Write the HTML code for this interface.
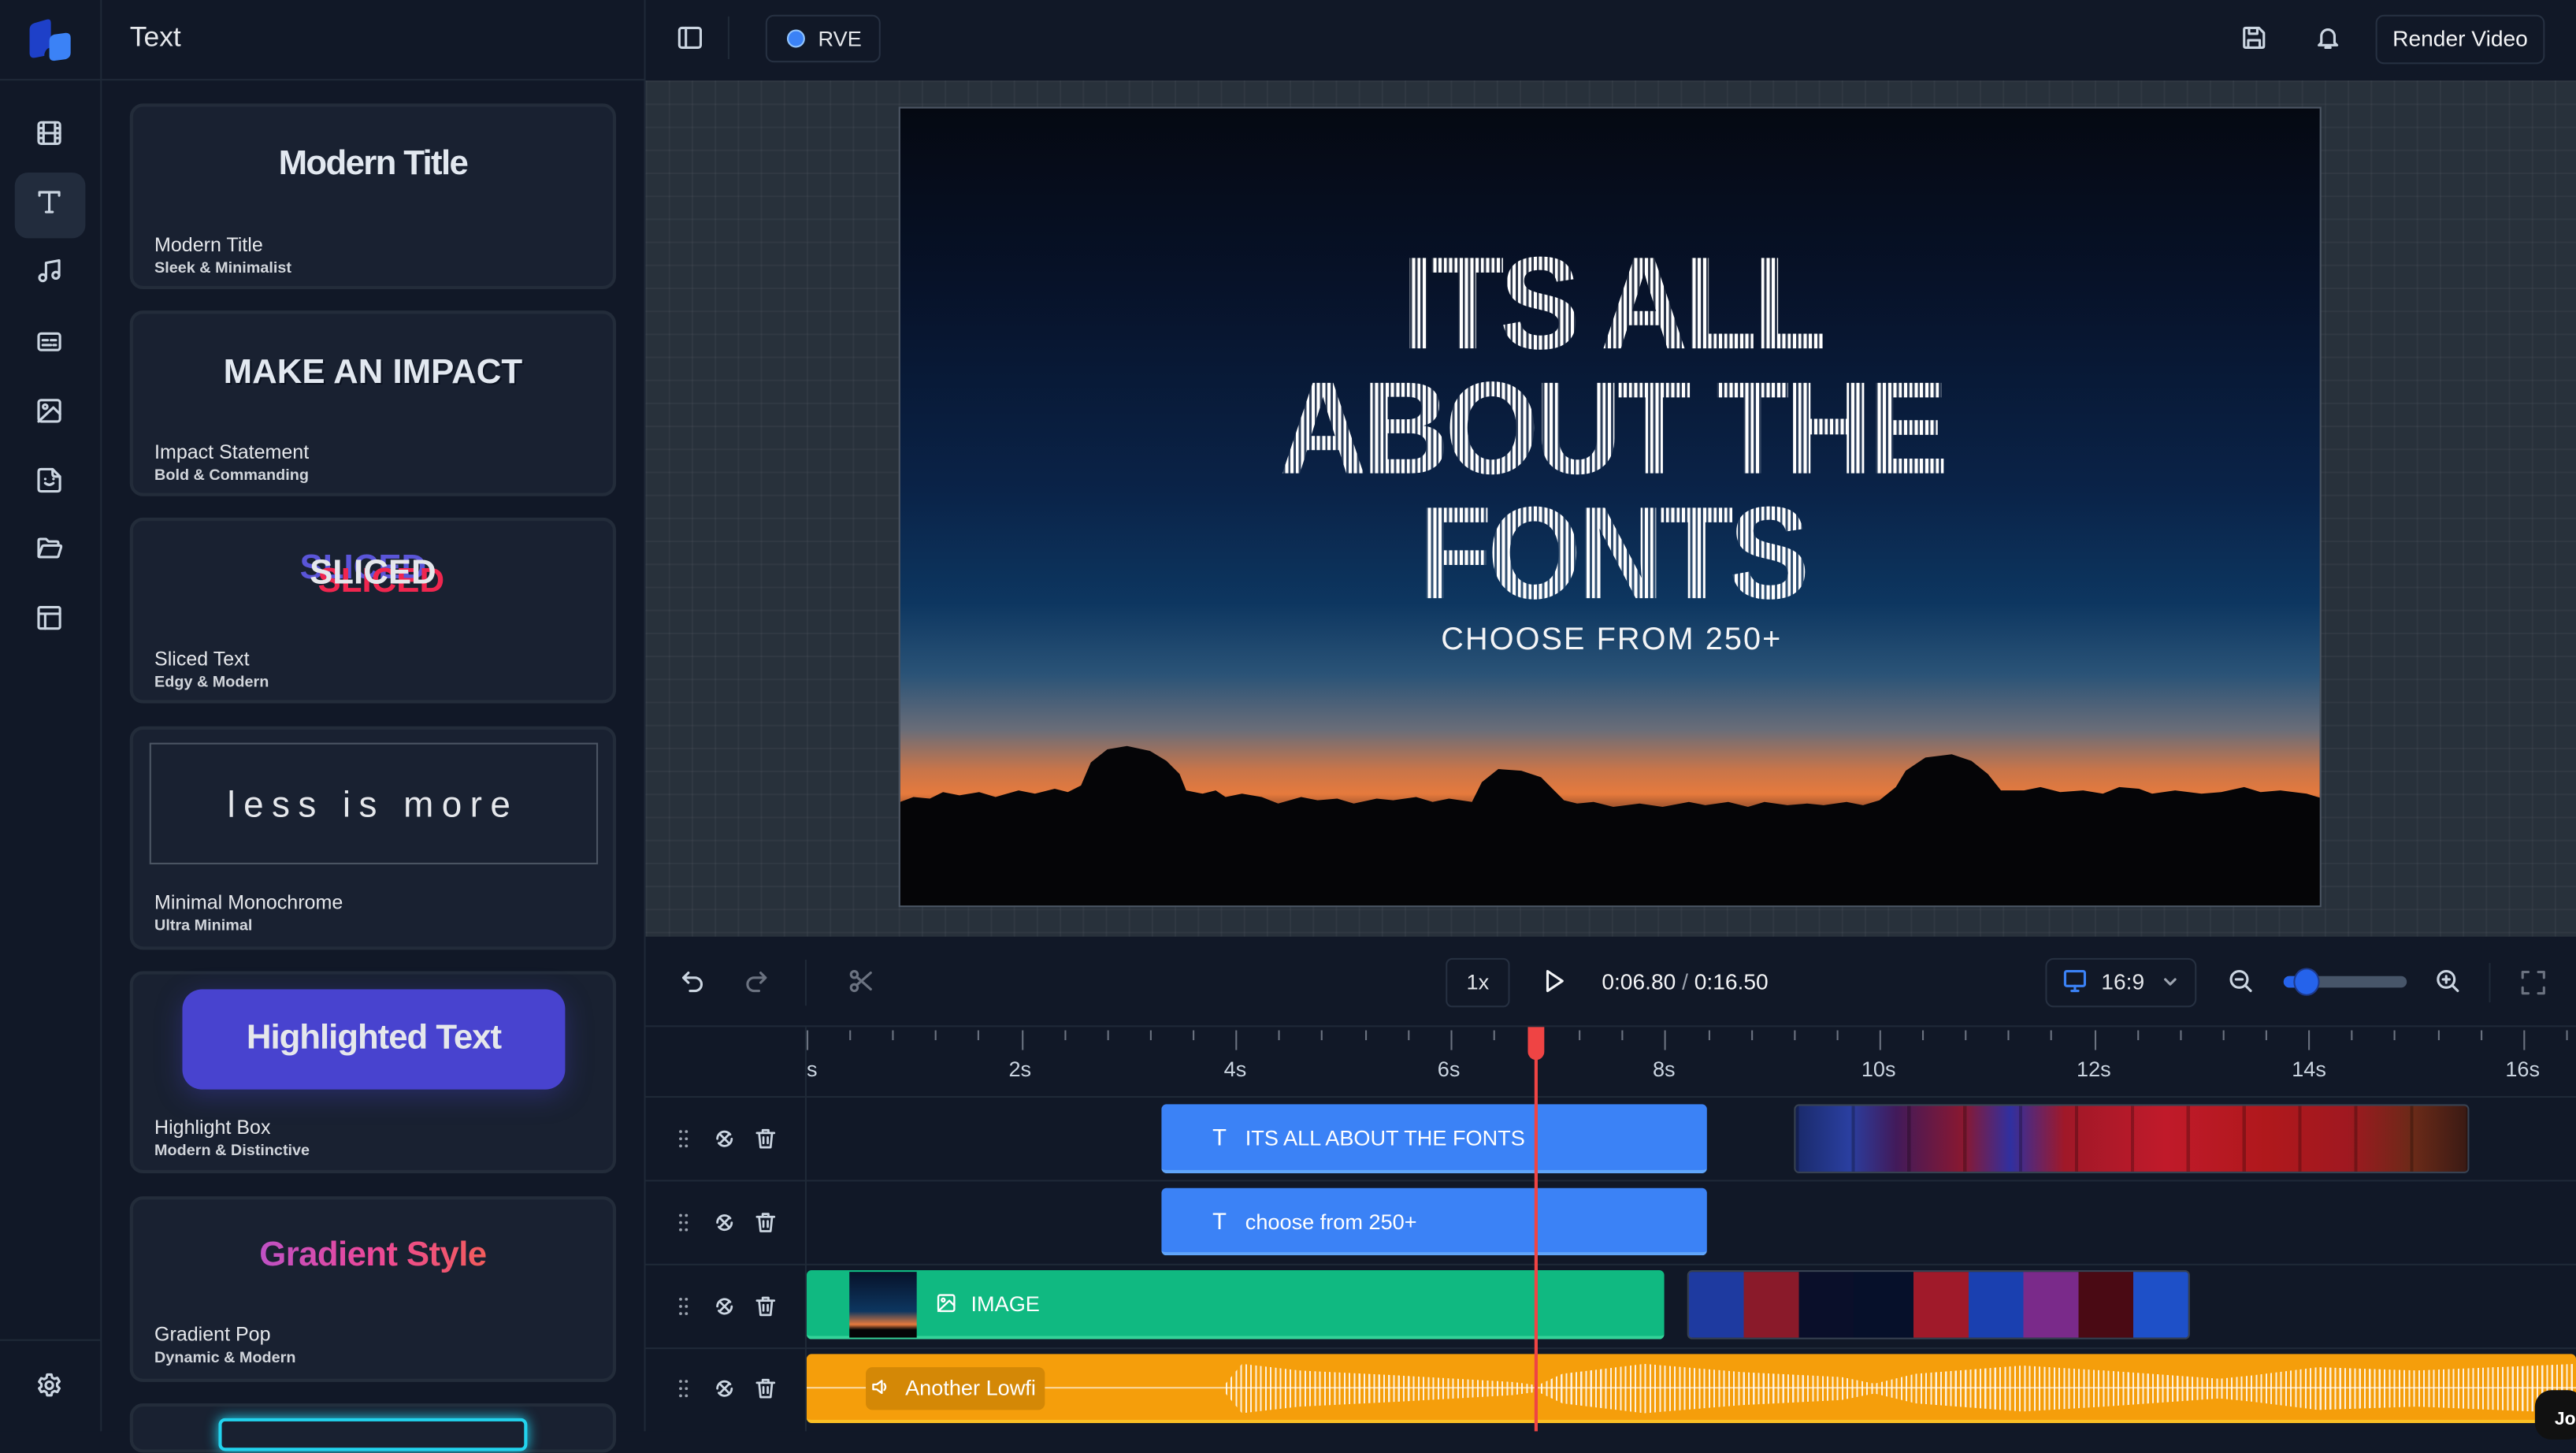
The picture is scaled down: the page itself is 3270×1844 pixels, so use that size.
<!DOCTYPE html>
<html><head><meta charset="utf-8">
<style>
*{box-sizing:border-box;margin:0;padding:0}
html,body{width:3270px;height:1816px;overflow:hidden;background:#111827}
#s{position:absolute;left:0;top:0;width:1568px;height:871px;transform:scale(2.08546);transform-origin:0 0;font-family:"Liberation Sans",sans-serif;color:#e5e7eb;background:#111827}
.a{position:absolute}
.ico{position:absolute;width:16px;height:16px;fill:none;stroke:#cbd5e1;stroke-width:1.5;stroke-linecap:round;stroke-linejoin:round}
.card{position:absolute;left:79px;width:296px;background:#192131;border:2px solid #232c3a;border-radius:8px}
.card .n{position:absolute;left:13px;font-size:12px;color:#e5e7eb}
.card .d{position:absolute;left:13px;font-size:9.5px;font-weight:bold;color:#d1d5db}
.clip{position:absolute;border-radius:3px;color:#fff;font-size:13px}
.tick{position:absolute;top:627px;width:1px;background:#6b7280}
.lab{position:absolute;top:643px;font-size:13px;color:#cbd5e1}
.th{position:absolute;left:392px;width:1176px;height:1px;background:#1f2937}
.ttl{text-align:center;font-size:80px;line-height:76px;height:76px;letter-spacing:-3px;background:repeating-linear-gradient(90deg,#fff 0 2px,rgba(255,255,255,.15) 2px 3.5px);-webkit-background-clip:text;background-clip:text;color:transparent;font-weight:bold}
</style></head><body><div id="s">
<!-- rail -->
<div class="a" style="left:61px;top:0;width:1px;height:871px;background:#1f2937"></div>
<div class="a" style="left:0;top:48px;width:392px;height:1px;background:#1f2937"></div>
<div class="a" style="left:392px;top:0;width:1px;height:871px;background:#1f2937"></div>
<svg class="a" style="left:14px;top:10px" width="32" height="30" viewBox="0 0 32 30"><path d="M4 8q0-3 3-4l7-2q3-1 3 2v15q-3 0-4 4l0 1-5 1q-4 1-4-3z" fill="#1e40c8"/><path d="M16 15q0-3 3-4l7-1q3 0 3 3v9q0 3-3 4l-7 1q-3 0-3-3z" fill="#3b82f6"/></svg>
<div class="a" style="left:9px;top:105px;width:43px;height:40px;background:#222c3d;border-radius:8px"></div>
<svg class="ico" style="left:22px;top:73px" viewBox="0 0 16 16"><rect x="1.5" y="1.5" width="13" height="13" rx="1.5"/><path d="M4.5 1.5v13M11.5 1.5v13M1.5 5h3M1.5 8h13M1.5 11h3M11.5 5h3M11.5 11h3"/></svg>
<svg class="ico" style="left:22px;top:115px" viewBox="0 0 16 16"><path d="M2 2h12M8 2v12M6 14h4M2 2v2M14 2v2"/></svg>
<svg class="ico" style="left:22px;top:157px" viewBox="0 0 16 16"><path d="M6 12V3l8-1.5v9"/><circle cx="4" cy="12" r="2"/><circle cx="12" cy="10.5" r="2"/></svg>
<svg class="ico" style="left:22px;top:200px" viewBox="0 0 16 16"><rect x="1.5" y="3" width="13" height="10" rx="1.5"/><path d="M4 7h3M9 7h3M4 10h5M10.5 10h1.5"/></svg>
<svg class="ico" style="left:22px;top:242px" viewBox="0 0 16 16"><rect x="1.5" y="1.5" width="13" height="13" rx="1.5"/><circle cx="5.5" cy="5.5" r="1.3"/><path d="M14.5 10l-4-4-9 8.5"/></svg>
<svg class="ico" style="left:22px;top:284px" viewBox="0 0 16 16"><path d="M1.5 3q0-1.5 1.5-1.5h7l4.5 4.5v7.5q0 1.5-1.5 1.5H3q-1.5 0-1.5-1.5zM10 1.5v3q0 1.5 1.5 1.5h3M5.5 10q2.5 2 5 0M5.5 7.5h.1M10.5 7.5h.1"/></svg>
<svg class="ico" style="left:22px;top:326px" viewBox="0 0 16 16"><path d="M1.5 12.5V3q0-1 1-1h3.5l1.5 1.5h5q1 0 1 1V6M1.5 12.5L3.5 7q.3-1 1.3-1h9.7q1 0 .7 1l-1.7 5.5q-.3.5-1 .5H2.5q-1 0-1-.5z"/></svg>
<svg class="ico" style="left:22px;top:368px" viewBox="0 0 16 16"><rect x="1.5" y="1.5" width="13" height="13" rx="1"/><path d="M1.5 5.5h13M5.5 5.5v9"/></svg>
<div class="a" style="left:0;top:815px;width:61px;height:1px;background:#1f2937"></div>
<svg class="ico" style="left:22px;top:835px" viewBox="0 0 16 16"><circle cx="8" cy="8" r="2.2"/><path d="M6.7 1.5h2.6l.4 1.8 1.4.8 1.8-.6 1.3 2.2-1.4 1.3v1.6l1.4 1.3-1.3 2.2-1.8-.6-1.4.8-.4 1.8H6.7l-.4-1.8-1.4-.8-1.8.6-1.3-2.2L3.2 8.8V7.2L1.8 5.9l1.3-2.2 1.8.6 1.4-.8z"/></svg>
<!-- panel -->
<div class="a" style="left:79px;top:13px;font-size:17px;color:#e5e7eb">Text</div>
<div class="card" style="top:63px;height:113px"><div class="a" style="left:0;width:292px;top:23px;text-align:center;font-size:21px;font-weight:bold;color:#e2e8f0;letter-spacing:-0.8px">Modern Title</div><div class="n" style="top:77px">Modern Title</div><div class="d" style="top:93px">Sleek &amp; Minimalist</div></div>
<div class="card" style="top:189px;height:113px"><div class="a" style="left:0;width:292px;top:24px;text-align:center;font-size:21px;font-weight:900;color:#e2e8f0;text-shadow:1px 1px 0 #0b1220">MAKE AN IMPACT</div><div class="n" style="top:77px">Impact Statement</div><div class="d" style="top:93px">Bold &amp; Commanding</div></div>
<div class="card" style="top:315px;height:113px"><div class="a" style="left:0;width:292px;top:20px;text-align:center;font-size:21px;font-weight:900;color:#5a55d8;transform:translate(-6px,-3px)">SLICED</div><div class="a" style="left:0;width:292px;top:20px;text-align:center;font-size:21px;font-weight:900;color:#f0264f;transform:translate(5px,5px)">SLICED</div><div class="a" style="left:0;width:292px;top:20px;text-align:center;font-size:21px;font-weight:900;color:#e5e7eb">SLICED</div><div class="n" style="top:77px">Sliced Text</div><div class="d" style="top:93px">Edgy &amp; Modern</div></div>
<div class="card" style="top:442px;height:136px"><div class="a" style="left:10px;top:8px;width:273px;height:74px;border:1px solid #4b5563"></div><div class="a" style="left:0;width:292px;top:33px;text-align:center;font-size:22px;color:#e5e7eb;letter-spacing:5px">less is more</div><div class="n" style="top:98px">Minimal Monochrome</div><div class="d" style="top:114px">Ultra Minimal</div></div>
<div class="card" style="top:591px;height:123px"><div class="a" style="left:30px;top:9px;width:233px;height:61px;background:#4843cf;border-radius:12px;box-shadow:0 4px 16px rgba(72,67,207,.35);text-align:center;line-height:59px;font-size:21px;font-weight:bold;color:#e5e7eb;letter-spacing:-0.5px">Highlighted Text</div><div class="n" style="top:86px">Highlight Box</div><div class="d" style="top:102px">Modern &amp; Distinctive</div></div>
<div class="card" style="top:728px;height:113px"><div class="a" style="left:0;width:292px;top:22px;text-align:center;font-size:21px;font-weight:bold;background:linear-gradient(90deg,#8b5cf6,#ec4899,#f97316);-webkit-background-clip:text;background-clip:text;color:transparent;letter-spacing:-0.3px"><span style="padding:0 74px">Gradient Style</span></div><div class="n" style="top:75px">Gradient Pop</div><div class="d" style="top:91px">Dynamic &amp; Modern</div></div>
<div class="card" style="top:854px;height:30px"><div class="a" style="left:52px;top:7px;width:188px;height:20px;border:2px solid #22d3ee;border-radius:4px;box-shadow:0 0 8px #22d3ee"></div></div>
<!-- top bar -->
<svg class="ico" style="left:412px;top:15px" viewBox="0 0 16 16"><rect x="1.5" y="2" width="13" height="12" rx="1.5"/><path d="M5.5 2v12"/></svg>
<div class="a" style="left:443px;top:10px;width:1px;height:26px;background:#1f2937"></div>
<div class="a" style="left:466px;top:9px;width:70px;height:29px;border:1px solid #263041;border-radius:5px"></div>
<div class="a" style="left:479px;top:18px;width:11px;height:11px;border-radius:50%;background:#3b82f6;border:1px solid #93c5fd"></div>
<div class="a" style="left:498px;top:16px;font-size:13px;color:#e5e7eb">RVE</div>
<svg class="ico" style="left:1364px;top:15px" viewBox="0 0 16 16"><path d="M2 3q0-1 1-1h8l3 3v8q0 1-1 1H3q-1 0-1-1zM5 2v3.5h5V2M4.5 14V9.5h7V14"/></svg>
<svg class="ico" style="left:1409px;top:15px" viewBox="0 0 16 16"><path d="M4 11V7a4 4 0 018 0v4l1.5 1.5h-11zM6.5 14h3"/></svg>
<div class="a" style="left:1446px;top:9px;width:103px;height:30px;border:1px solid #263041;border-radius:5px;text-align:center;line-height:28px;font-size:13.5px;color:#f3f4f6">Render Video</div>
<!-- canvas area -->
<div class="a" style="left:393px;top:49px;width:1175px;height:521px;background-color:#28313b;background-image:linear-gradient(90deg,rgba(255,255,255,.035) 1px,transparent 1px),linear-gradient(rgba(255,255,255,.035) 1px,transparent 1px);background-size:14px 14px"></div>
<div class="a" style="left:547px;top:65px;width:866px;height:487px;border:1px solid #4b5563;overflow:hidden;background:linear-gradient(180deg,#050912 0%,#071229 22%,#0a2348 48%,#0d3660 62%,#2a5377 71%,#6a6d78 78%,#c8754a 83%,#e67a3d 86%,#402018 90%,#050507 93%)">
<svg class="a" style="left:0;top:360px" width="866" height="127" viewBox="0 0 866 127"><path d="M0 62l8-3 10 1 8-4 10 2 12-2 10 3 14-4 10 2 12-3 8 2 8-4 6-14 10-8 12-2 14 3 10 6 8 8 4 10 10 2 8-2 6 4 10-2 12 2 10 4 14-4 10 2 12-1 10 3 14-3 10 1 14-2 10 3 10-2 14 2 6-12 10-8 14 1 12 4 8 8 6 6 8 2 10-1 12 3 16-2 14 2 16-3 10 2 14-2 12 3 10-3 14 2 12-1 10 1 14-2 10 2 10-3 10-8 6-10 12-8 16-2 12 4 10 8 8 10 14 0 10-2 12 3 14-1 12 2 10-4 12 1 8 3 14-2 16 2 12-1 14-3 10 3 12-1 16 2L866 60V127H0z" fill="#050507"/></svg>
<div class="a" style="left:0;width:866px;top:81px;transform:scaleX(.92)"><div class="ttl">ITS ALL</div><div class="ttl">ABOUT THE</div><div class="ttl">FONTS</div></div>
<div class="a" style="left:0;width:866px;top:313px;text-align:center;font-size:19px;color:#f3f4f6;letter-spacing:1px">CHOOSE FROM 250+</div>
</div>
<!-- controls -->
<div class="a" style="left:393px;top:624px;width:1175px;height:1px;background:#1f2937"></div>
<svg class="ico" style="left:414px;top:589px" viewBox="0 0 16 16"><path d="M5 3L2 6l3 3M2 6h7a4 4 0 010 8H6"/></svg>
<svg class="ico" style="left:452px;top:589px;stroke:#6b7280" viewBox="0 0 16 16"><path d="M11 3l3 3-3 3M14 6H7a4 4 0 000 8h3"/></svg>
<div class="a" style="left:490px;top:584px;width:1px;height:28px;background:#1f2937"></div>
<svg class="ico" style="left:516px;top:589px;stroke:#6b7280" viewBox="0 0 16 16"><circle cx="4" cy="4" r="2"/><circle cx="4" cy="12" r="2"/><path d="M5.5 5.5L14 13M5.5 10.5L14 3"/></svg>
<div class="a" style="left:880px;top:583px;width:39px;height:30px;border:1px solid #263041;border-radius:4px;text-align:center;line-height:28px;font-size:13px;color:#e5e7eb">1x</div>
<svg class="ico" style="left:938px;top:589px;stroke:#f3f4f6" viewBox="0 0 16 16"><path d="M4 2l9 6-9 6z"/></svg>
<div class="a" style="left:975px;top:590px;font-size:13.5px;color:#f3f4f6">0:06.80 <span style="color:#9ca3af">/</span> 0:16.50</div>
<div class="a" style="left:1245px;top:583px;width:92px;height:30px;border:1px solid #263041;border-radius:5px"></div>
<svg class="ico" style="left:1255px;top:589px;stroke:#3b82f6" viewBox="0 0 16 16"><rect x="2" y="2" width="12" height="9" rx="1"/><path d="M8 11v3M6 14h4"/></svg>
<div class="a" style="left:1279px;top:590px;font-size:13.5px;color:#e5e7eb">16:9</div>
<svg class="ico" style="left:1316px;top:592px;width:10px;height:10px;stroke:#9ca3af" viewBox="0 0 10 10"><path d="M2 4l3 3 3-3"/></svg>
<svg class="ico" style="left:1356px;top:589px" viewBox="0 0 16 16"><circle cx="7" cy="7" r="5"/><path d="M11 11l3 3M5 7h4"/></svg>
<div class="a" style="left:1390px;top:594px;width:75px;height:7px;border-radius:4px;background:#475569"></div>
<div class="a" style="left:1390px;top:594px;width:14px;height:7px;border-radius:4px;background:#2563eb"></div>
<div class="a" style="left:1396px;top:589px;width:16px;height:17px;border-radius:50%;background:#2563eb;border:1px solid #1e3a8a"></div>
<svg class="ico" style="left:1482px;top:589px" viewBox="0 0 16 16"><circle cx="7" cy="7" r="5"/><path d="M11 11l3 3M5 7h4M7 5v4"/></svg>
<div class="a" style="left:1515px;top:586px;width:1px;height:24px;background:#1f2937"></div>
<svg class="ico" style="left:1534px;top:590px;stroke:#6b7280" viewBox="0 0 16 16"><path d="M1.5 5V1.5H5M11 1.5h3.5V5M14.5 11v3.5H11M5 14.5H1.5V11"/></svg>
<!-- ruler -->
<div class="a" style="left:490px;top:625px;width:1px;height:246px;background:#1f2937"></div>
<div class="th" style="top:667px"></div><div class="th" style="top:718px"></div><div class="th" style="top:769px"></div><div class="th" style="top:820px"></div>
<div id="ticks"></div>
<div class="lab" style="left:491px">s</div><div class="lab" style="left:614px">2s</div><div class="lab" style="left:745px">4s</div><div class="lab" style="left:875px">6s</div><div class="lab" style="left:1006px">8s</div><div class="lab" style="left:1133px">10s</div><div class="lab" style="left:1264px">12s</div><div class="lab" style="left:1395px">14s</div><div class="lab" style="left:1525px">16s</div>
<div id="tic"></div>
<!-- clips -->
<div class="clip" style="left:707px;top:672px;width:332px;height:42px;background:#3b82f6;border-bottom:2px solid #60a5fa"><span class="a" style="left:51px;top:13px">ITS ALL ABOUT THE FONTS</span><span class="a" style="top:12px;left:31px;font-size:14px">T</span></div>
<div class="a" style="left:1092px;top:672px;width:411px;height:42px;border-radius:3px;border:1px solid #374151;background:linear-gradient(90deg,#1a2a6a,#2a3fa0 8%,#421a5a 15%,#8a1830 25%,#3030a0 32%,#a01828 40%,#c01a2a 55%,#b0181c 70%,#a01820 82%,#6a2a18 92%,#3a1a14);overflow:hidden"><div class="a" style="inset:0;background:repeating-linear-gradient(90deg,rgba(0,0,0,.25) 0 2px,transparent 2px 34px)"></div></div>
<div class="clip" style="left:707px;top:723px;width:332px;height:41px;background:#3b82f6;border-bottom:2px solid #60a5fa"><span class="a" style="left:31px;top:12px;font-size:14px">T</span><span class="a" style="left:51px;top:13px">choose from 250+</span></div>
<div class="clip" style="left:491px;top:773px;width:522px;height:42px;background:#10b981;border-bottom:2px solid #34d399"><div class="a" style="left:26px;top:1px;width:41px;height:40px;background:linear-gradient(180deg,#071229,#0d3660 60%,#e67a3d 80%,#050507 88%)"></div><svg class="ico" style="left:79px;top:14px;width:12px;height:12px;stroke:#fff" viewBox="0 0 16 16"><rect x="1.5" y="1.5" width="13" height="13" rx="1.5"/><circle cx="5.5" cy="5.5" r="1.3"/><path d="M14.5 10l-4-4-9 8.5"/></svg><span class="a" style="left:100px;top:13px">IMAGE</span></div>
<div class="a" style="left:1027px;top:773px;width:306px;height:42px;border-radius:3px;border:1px solid #374151;background:linear-gradient(90deg,#1e3aa0 0 11%,#8a1a2a 11% 22%,#0a0f2a 22% 33%,#06102a 33% 45%,#a01a2a 45% 56%,#1a40b0 56% 67%,#7a2a8a 67% 78%,#4a0a14 78% 89%,#1e50c8 89%)"></div>
<div class="clip" style="left:491px;top:824px;width:1077px;height:42px;background:#f59e0b;border-bottom:2px solid #fbbf24;overflow:hidden">
<div class="a" style="left:0;top:20px;width:1077px;height:1px;background:rgba(255,255,255,.6)"></div>
<div class="a" style="left:0;top:0;width:1077px;height:42px;background:repeating-linear-gradient(90deg,rgba(255,255,255,.85) 0 1px,transparent 1px 3px);clip-path:polygon(255px 18px,265px 6px,300px 10px,360px 13px,430px 17px,445px 19px,460px 12px,510px 6px,570px 11px,630px 14px,650px 18px,675px 12px,740px 7px,790px 10px,860px 15px,880px 13px,920px 8px,980px 10px,1077px 6px,1077px 36px,980px 32px,920px 34px,880px 29px,860px 27px,790px 32px,740px 35px,675px 30px,650px 24px,630px 28px,570px 31px,510px 36px,460px 30px,445px 23px,430px 25px,360px 29px,300px 32px,265px 36px,255px 24px)"></div>
<div class="a" style="left:36px;top:8px;width:109px;height:26px;background:#d48806;border-radius:4px"></div>
<svg class="ico" style="left:39px;top:14px;width:12px;height:12px;stroke:#fff" viewBox="0 0 16 16"><path d="M2 6h3l4-3v10l-4-3H2zM11 5.5q2 2.5 0 5"/></svg><span class="a" style="left:60px;top:13px">Another Lowfi</span></div>
<div class="a" style="left:1543px;top:846px;width:30px;height:30px;border-radius:10px;background:#111;color:#fff;font-size:11px;font-weight:bold;padding:12px 0 0 12px">Jo</div>
<!-- playhead -->
<div class="a" style="left:934px;top:627px;width:2px;height:244px;background:#ef4444"></div>
<div class="a" style="left:930px;top:625px;width:10px;height:20px;border-radius:0 0 5px 5px;background:#ef4444"></div>
</div>
<script>
var t='';for(var i=0;i<=42;i++){var x=491+i*26.12,big=i%5==0;t+='<div class="tick" style="left:'+x+'px;height:'+(big?12:6)+'px"></div>';}
document.getElementById('ticks').innerHTML=t;
var h='';[693,744,795,845].forEach(function(y){
h+='<svg class="ico" style="left:409px;top:'+(y-7)+'px;width:14px;height:14px;stroke:#9ca3af" viewBox="0 0 16 16"><path d="M6 3h.1M10 3h.1M6 8h.1M10 8h.1M6 13h.1M10 13h.1" stroke-width="2"/></svg>';
h+='<svg class="ico" style="left:434px;top:'+(y-7)+'px;width:14px;height:14px" viewBox="0 0 16 16"><path d="M3 8a5 5 0 019-3M13 8a5 5 0 01-9 3M5 5l3 3-3 3M11 5l-3 3 3 3"/></svg>';
h+='<svg class="ico" style="left:459px;top:'+(y-7)+'px;width:14px;height:14px" viewBox="0 0 16 16"><path d="M2 4h12M6 4V2h4v2M3.5 4l1 10h7l1-10M6.5 7v4M9.5 7v4"/></svg>';});
document.getElementById('tic').innerHTML=h;
</script>
</body></html>
